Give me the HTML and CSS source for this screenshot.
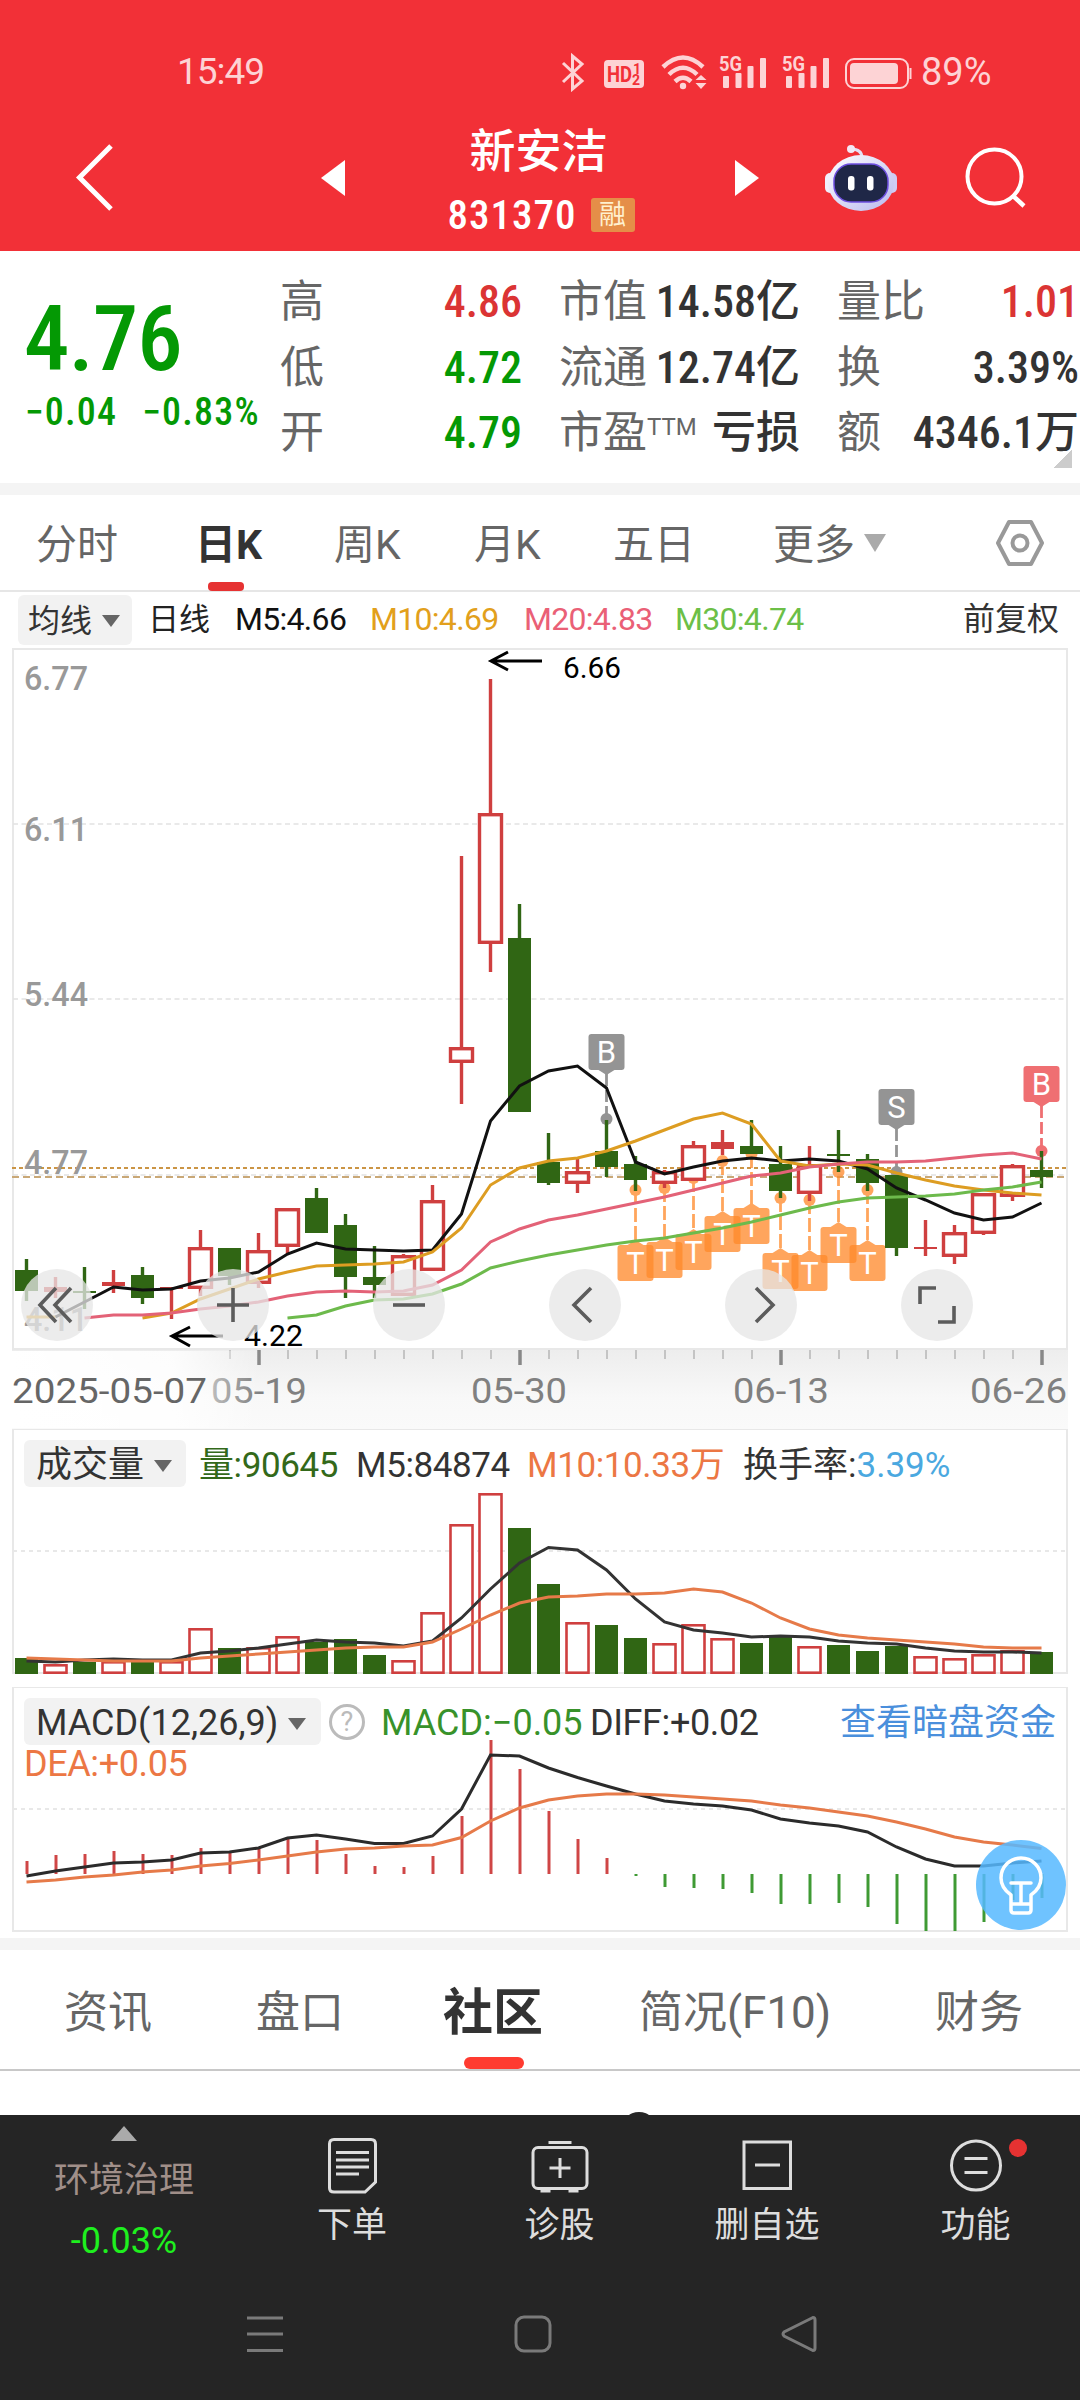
FILE: index.html
```html
<!DOCTYPE html>
<html lang="zh-CN">
<head>
    <meta charset="UTF-8">
    <title>新安洁 831370</title>
    <link rel="stylesheet" href="styles.css">
</head>
<body>
<div id="header">
    <div class="status">
        <span class="time">15:49</span>
        <svg class="status-icons" width="352" height="40" viewBox="560 50 352 40">
            <path d="M563 61 L582 79 L572.500 87 V54 L582 62 L563 80" fill="none" stroke="#fdd3d5" stroke-width="3"/>
            <rect x="604" y="58" width="40" height="28" rx="4" fill="#fdd3d5"/>
            <text x="607" y="80" font-size="22" font-weight="700" fill="#f23037" textLength="25" lengthAdjust="spacingAndGlyphs">HD</text>
            <text x="633" y="72" font-size="14" font-weight="700" fill="#f23037">1</text>
            <text x="632" y="83" font-size="14" font-weight="700" fill="#f23037">2</text>
            <g fill="none" stroke="#fdd3d5" stroke-width="4.500">
                <path d="M663 65 Q683 46 703 65"/>
                <path d="M669 72.500 Q683 59 697 72.500"/>
                <path d="M675 79.500 Q683 72 691 79.500"/>
            </g>
            <circle cx="683" cy="84" r="3.200" fill="#fdd3d5"/>
            <path d="M701 74 L706.500 79 H695.500z M701 88 L706.500 82 H695.500z" transform="translate(0 -1)" fill="#fdd3d5"/>
            <g id="sig" fill="#fdd3d5">
                <text x="719" y="69" font-size="20" font-weight="700" textLength="23" lengthAdjust="spacingAndGlyphs">5G</text>
                <rect x="723" y="74" width="6" height="12" rx="1"/>
                <rect x="735.500" y="71" width="6" height="15" rx="1"/>
                <rect x="747.500" y="64" width="6" height="22" rx="1"/>
                <rect x="760" y="56" width="6" height="30" rx="1"/>
            </g>
            <use href="#sig" x="63"/>
            <rect x="846" y="57" width="62" height="29" rx="8" fill="none" stroke="#fdd3d5" stroke-width="2"/>
            <rect x="850" y="61" width="48" height="21" rx="4" fill="#fdd3d5"/>
            <rect x="909.500" y="66" width="2" height="11" fill="#fdd3d5"/>
        </svg>
        <span>89%</span>
    </div>
    <div class="nav">
        <svg width="40" height="70" viewBox="75 142 40 70"><path d="M111 145 L79.500 176.500 L111 208" fill="none" stroke="#fff" stroke-width="5"/></svg>
        <svg width="26" height="38" viewBox="320 160 26 38"><path d="M321 179 L345 161 V197z" fill="#fff"/></svg>
        <div class="name">
            <h1>新安洁</h1>
            <p><span class="num">831370</span><i>融</i></p>
        </div>
        <svg width="26" height="38" viewBox="734 160 26 38"><path d="M759 179 L735 161 V197z" fill="#fff"/></svg>
        <svg width="74" height="70" viewBox="824 141 74 70">
            <defs>
                <linearGradient id="head" x1="0" y1="0" x2="1" y2="1">
                    <stop offset="0" stop-color="#fff"/>
                    <stop offset="1" stop-color="#b9b9ee"/>
                </linearGradient>
            </defs>
            <path d="M862 156 Q862 147 851 147" fill="none" stroke="#e4e0f6" stroke-width="3"/>
            <circle cx="851" cy="147" r="4" fill="#f3e9f6"/>
            <rect x="825" y="171" width="12" height="20" rx="5" fill="#f1effc"/>
            <rect x="885" y="171" width="12" height="20" rx="5" fill="#cfccf4"/>
            <ellipse cx="861" cy="181" rx="33" ry="28" fill="url(#head)"/>
            <rect x="834" y="162" width="54" height="38" rx="17" fill="#1f2747" stroke="#6e4fe0" stroke-width="1.500"/>
            <rect x="848" y="174" width="6.500" height="14.500" rx="3" fill="#fff"/>
            <rect x="867" y="174" width="6.500" height="14.500" rx="3" fill="#fff"/>
        </svg>
        <svg width="64" height="64" viewBox="964 147 64 64"><circle cx="994.500" cy="177.500" r="27" fill="none" stroke="#fff" stroke-width="4"/><path d="M1012 196 L1024 207" stroke="#fff" stroke-width="4.500"/></svg>
    </div>
</div>

<div id="quote">
    <div class="price">
        <b class="num green">4.76</b>
        <p class="num green"><span>−0.04</span><span>−0.83%</span></p>
    </div>
    <dl class="c1">
        <dt>高</dt><dd class="num red">4.86</dd>
        <dt>低</dt><dd class="num green">4.72</dd>
        <dt>开</dt><dd class="num green">4.79</dd>
    </dl>
    <dl class="c2">
        <dt>市值</dt><dd class="num">14.58亿</dd>
        <dt>流通</dt><dd class="num">12.74亿</dd>
        <dt>市盈<sup>TTM</sup></dt><dd class="num">亏损</dd>
    </dl>
    <dl class="c3">
        <dt>量比</dt><dd class="num red">1.01</dd>
        <dt>换</dt><dd class="num">3.39%</dd>
        <dt>额</dt><dd class="num">4346.1万</dd>
    </dl>
    <span class="corner"></span>
</div>

<div id="period">
    <span>分时</span>
    <span class="on">日K</span>
    <span>周K</span>
    <span>月K</span>
    <span>五日</span>
    <span>更多<em class="down"></em></span>
    <svg width="50" height="48" viewBox="0 0 50 48" fill="none" stroke="#999" stroke-width="4"><path d="M14 3 H36 L47 24 L36 45 H14 L3 24z" stroke-linejoin="round"/><circle cx="25" cy="24" r="7.500"/></svg>
</div>

<div id="ma">
    <span class="pick">均线<em class="down"></em></span>
    <span class="day">日线</span>
    <span class="num m5">M5:4.66</span>
    <span class="num m10">M10:4.69</span>
    <span class="num m20">M20:4.83</span>
    <span class="num m30">M30:4.74</span>
    <span class="fq">前复权</span>
</div>

<div id="kline">
    <svg id="k-svg" width="1080" height="781" viewBox="0 648 1080 781"></svg>
    <div class="tools">
        <span><svg viewBox="0 0 72 72"><path d="M35 19 L19 36 L35 53 M50 19 L34 36 L50 53"/></svg></span>
        <span><svg viewBox="0 0 72 72"><path d="M20 36 H52 M36 19 V53"/></svg></span>
        <span><svg viewBox="0 0 72 72"><path d="M20 36 H52"/></svg></span>
        <span><svg viewBox="0 0 72 72"><path d="M42 19 L25 36 L42 53"/></svg></span>
        <span><svg viewBox="0 0 72 72"><path d="M31 19 L48 36 L31 53"/></svg></span>
        <span><svg viewBox="0 0 72 72"><path d="M35 19 H19 V35 M37 53 H53 V37"/></svg></span>
    </div>
</div>

<div id="vol">
    <svg id="v-svg" width="1080" height="258" viewBox="0 1429 1080 258"></svg>
    <div class="legend">
        <span class="pick">成交量<em class="down"></em></span>
        <span class="num v1">量:90645</span>
        <span class="num v2">M5:84874</span>
        <span class="num v3">M10:10.33万</span>
        <span class="num v4">换手率:<i>3.39%</i></span>
    </div>
</div>

<div id="macd">
    <svg id="m-svg" width="1080" height="251" viewBox="0 1687 1080 251"></svg>
    <div class="legend">
        <span class="pick">MACD(12,26,9)<em class="down"></em></span>
        <span class="help">?</span>
        <span class="num d1">MACD:−0.05</span>
        <span class="num d2">DIFF:+0.02</span>
        <span class="link">查看暗盘资金</span>
        <span class="num d3">DEA:+0.05</span>
    </div>
    <span class="bulb"><svg width="90" height="90" viewBox="0 0 90 90" fill="none" stroke="#fff" stroke-width="3.500" stroke-linejoin="round" stroke-linecap="round"><path d="M35 62 V55 Q25 48 25 38 A20 20 0 0 1 65 38 Q65 48 55 55 V70 Q55 73 52 73 H38 Q35 73 35 70z M35 64 H55 M35 43 H55 M45 43 V64"/></svg></span>
</div>

<div id="tabs">
    <span>资讯</span>
    <span>盘口</span>
    <span class="on">社区</span>
    <span>简况(F10)</span>
    <span>财务</span>
</div>
<div id="feed"><i></i></div>

<div id="footer">
    <div class="bar">
        <div class="index">
            <em></em>
            <span>环境治理</span>
            <b>-0.03%</b>
        </div>
        <div class="item">
            <svg width="60" height="60" viewBox="322 2136 60 60"><path d="M334 2139.500 H371 Q375.500 2139.500 375.500 2144 V2182 L365 2192 H334 Q329.500 2192 329.500 2188 V2144 Q329.500 2139.500 334 2139.500z M336 2152.500 H369 M336 2160 H369 M336 2167 H369 M336 2174 H359"/></svg>
            <span>下单</span>
        </div>
        <div class="item">
            <svg width="60" height="60" viewBox="529.500 2136 60 60"><rect x="532.500" y="2147.500" width="54" height="41" rx="5"/><path d="M548 2142.500 H571 M559.500 2158 V2178 M549 2168 H570 M540 2191 H550 M568 2191 H578"/></svg>
            <span>诊股</span>
        </div>
        <div class="item">
            <svg width="60" height="60" viewBox="737 2136 60 60"><path d="M744 2142 H790.500 V2188.500 H744z M755 2165 H780"/></svg>
            <span>删自选</span>
        </div>
        <div class="item">
            <svg width="60" height="60" viewBox="945.500 2136 60 60"><circle cx="975.500" cy="2165.500" r="24.500"/><path d="M964 2158.500 H987 M964 2172.500 H987"/></svg>
            <span>功能</span>
            <i></i>
        </div>
    </div>
    <div class="sys">
        <svg width="38" height="38" viewBox="0 0 38 38"><path d="M1 3 H37 M1 19 H37 M1 35.500 H37"/></svg>
        <svg width="38" height="38" viewBox="0 0 38 38"><rect x="2" y="2" width="34" height="34" rx="8"/></svg>
        <svg width="38" height="38" viewBox="0 0 38 38"><path d="M33 2.500 L4 17 Q2 19 4 21 L33 35.500 Q35 35.500 35 33 V5 Q35 2.500 33 2.500z"/></svg>
    </div>
</div>

<script src="chart.js"></script>
</body>
</html>
```
FILE: styles.css
```css
* {
    box-sizing: border-box;
    margin: 0;
    padding: 0;
}

body {
    width: 1080px;
    height: 2400px;
    overflow: hidden;
    background: #fff;
    color: #333;
    font-family: Roboto, "Noto Sans CJK SC", sans-serif;
}

svg {
    display: block;
}

i, em {
    font-style: normal;
}

.num {
    font-stretch: 87%;
    font-weight: 500;
    white-space: nowrap;
}

.red {
    color: #db3434 !important;
}

.green {
    color: #049904 !important;
}

.down {
    display: inline-block;
    border: 9px solid transparent;
    border-top: 12px solid #666;
    border-bottom: 0;
}

/* header */
#header {
    height: 251px;
    background: #f23037;
    color: #fff;
}

.status {
    display: flex;
    align-items: center;
    height: 94px;
    padding: 50px 0 0 177px;
    font-size: 37px;
    line-height: 40px;
    letter-spacing: -1px;
    color: #fdd3d5;
}

.status .time {
    width: 383px;
}

.status-icons {
    margin-right: 9px;
    letter-spacing: 0;
}

.status-icons + span {
    font-size: 38px;
    letter-spacing: 0;
}

.nav {
    display: grid;
    grid-template-columns: 245px 80px 334px 90px 140px 64px;
    align-items: center;
    height: 157px;
    padding: 0 0 0 75px;
}

.nav > svg {
    margin-top: 10px;
}

.name {
    margin-left: 6px;
    width: 270px;
    text-align: center;
}

.name h1 {
    font-size: 46px;
    font-weight: 500;
    line-height: 56px;
    margin: 11px 0 0 -5px;
}

.name p {
    display: flex;
    justify-content: center;
    align-items: center;
    gap: 14px;
    height: 36px;
    margin-top: 18px;
    font-size: 41px;
}

.name .num {
    letter-spacing: 1px;
}

.name i {
    width: 44px;
    height: 34px;
    border-radius: 3px;
    background: #e58e48;
    color: #fff0cf;
    font-size: 27px;
    line-height: 35px;
}

/* quote */
#quote {
    position: relative;
    display: grid;
    grid-template-columns: 255px 242px 278px 279px;
    height: 244px;
    padding: 19px 0 0 25px;
    border-bottom: 12px solid #f4f4f4;
}

#quote dl {
    display: grid;
    grid-template-columns: 44px auto;
    grid-auto-rows: 65.5px;
    justify-content: space-between;
    font-size: 44px;
    line-height: 65px;
}

#quote dl.c2, #quote dl.c3 {
    margin-left: 37px;
}

#quote dt {
    color: #666;
    white-space: nowrap;
}

#quote dd {
    text-align: right;
}

#quote sup {
    display: inline-block;
    font-size: 24px;
    line-height: 22px;
    vertical-align: 13px;
}

.price b {
    display: block;
    font-size: 91px;
    font-weight: 500;
    line-height: 100px;
    letter-spacing: -1px;
    margin: 19px 0 0 -1px;
}

.price p {
    display: flex;
    gap: 25px;
    font-size: 38px;
    line-height: 44px;
    letter-spacing: 1.2px;
    margin-top: 1px;
}

.corner {
    position: absolute;
    right: 8px;
    top: 199px;
    width: 18px;
    height: 18px;
    background: linear-gradient(135deg, transparent 50%, #ccc 50%);
}

/* period tabs */
#period {
    display: grid;
    grid-template-columns: 159px 139px 140px 139px 160px 222px 60px;
    align-items: center;
    height: 97px;
    padding-left: 36px;
    border-bottom: 2px solid #e6e6e6;
    font-size: 41px;
    line-height: 89px;
    color: #666;
}

#period span {
    padding-top: 6px;
}

#period .on {
    position: relative;
    color: #333;
    font-weight: 700;
}

#period .on:after {
    content: "";
    position: absolute;
    left: 13px;
    bottom: -1px;
    width: 36px;
    height: 9px;
    border-radius: 4px;
    background: #e63232;
}

#period .down {
    border-width: 18px 11px 0;
    border-top-color: #aaa;
    margin-left: 9px;
    vertical-align: 7px;
}

/* ma row */
#ma {
    display: grid;
    grid-template-columns: 130px 87px 135px 154px 151px 288px auto;
    align-items: center;
    height: 56px;
    padding-left: 18px;
    padding-bottom: 1px;
    font-size: 32px;
    line-height: 53px;
}

#ma .num {
    font-weight: 400;
    font-stretch: normal;
    letter-spacing: -.7px;
}

.pick {
    background: #f2f2f2;
    border-radius: 6px;
    white-space: nowrap;
}

#ma .pick {
    width: 114px;
    height: 50px;
    padding-left: 10px;
    font-size: 32px;
}

.pick .down {
    margin-left: 10px;
    vertical-align: 5px;
}

.day {
    color: #222;
    font-size: 31px;
}

.m5 { color: #111; }
.m10 { color: #e2a01c; }
.m20 { color: #ea6076; }
.m30 { color: #6cbf47; }

/* charts */
#kline, #vol, #macd {
    position: relative;
}

.tools {
    position: absolute;
    left: 21px;
    top: 621px;
    display: flex;
    gap: 104px;
}

.tools span {
    width: 72px;
    height: 72px;
    border-radius: 50%;
    background: rgba(230, 230, 230, .76);
}

.tools path {
    fill: none;
    stroke: #5c5c5c;
    stroke-width: 3.6;
}

.legend {
    position: absolute;
    left: 24px;
    top: 11px;
    display: grid;
    grid-template-columns: 175px 157px 171px 216px auto;
    font-size: 35px;
    line-height: 51px;
}

.legend .num {
    font-weight: 400;
    font-stretch: normal;
    letter-spacing: -.4px;
}

.legend .v4 {
    letter-spacing: 0;
}

.legend .pick {
    width: 162px;
    height: 47px;
    padding-left: 12px;
    font-size: 36px;
}

.v1 { color: #33691a; }
.v3, .d3 { color: #ec7744; }
.v4 i { color: #4aa8e0; }

#macd .legend {
    grid-template-columns: 305px 52px 209px 250px auto;
    grid-auto-rows: 48px 36px;
}

#macd .num {
    font-size: 36px;
}

#macd .d1 {
    letter-spacing: 0;
}

#macd .pick {
    width: 297px;
}

.help {
    width: 36px;
    height: 36px;
    margin-top: 6px;
    border: 3px solid #bbb;
    border-radius: 50%;
    color: #bbb;
    font-size: 27px;
    line-height: 30px;
    text-align: center;
}

.d1 { color: #38922a; }

.link {
    color: #4a8fdc;
    font-size: 36px;
}

#macd .d3 {
    grid-column: 1;
    line-height: 36px;
}

.bulb {
    position: absolute;
    left: 976px;
    top: 153px;
    width: 90px;
    height: 90px;
    border-radius: 50%;
    background: rgba(86, 184, 255, .85);
}

/* section tabs */
#tabs {
    display: grid;
    grid-template-columns: 192px 187px 196px 296px auto;
    align-items: center;
    height: 133px;
    padding-left: 64px;
    border-top: 12px solid #f4f4f4;
    border-bottom: 2px solid #c8c8c8;
    font-size: 44px;
    line-height: 112px;
    color: #666;
}

#tabs span {
    padding-top: 7px;
}

#tabs .on {
    position: relative;
    font-size: 50px;
    font-weight: 700;
    color: #333;
}

#tabs .on:after {
    content: "";
    position: absolute;
    left: 21px;
    bottom: 0;
    width: 60px;
    height: 12px;
    border-radius: 6px;
    background: #ff3b30;
}

#feed {
    height: 44px;
    overflow: hidden;
}

#feed i {
    display: block;
    width: 36px;
    height: 36px;
    margin: 41px 0 0 621px;
    border-radius: 50%;
    background: #252525;
}

/* footer */
#footer {
    height: 285px;
    background: #252525;
}

.bar {
    display: grid;
    grid-template-columns: 248px 208px 207px 208px 209px;
    height: 180px;
    color: #ddd;
    font-size: 35px;
    text-align: center;
}

.index {
    padding-top: 11px;
}

.index em {
    display: block;
    width: 26px;
    margin: 0 auto;
    border: 13px solid transparent;
    border-top: 0;
    border-bottom: 15px solid #aaa;
}

.index span {
    display: block;
    line-height: 52px;
    margin-top: 14px;
    color: #a08f89;
}

.index b {
    display: block;
    margin-top: 14px;
    font-size: 36px;
    font-weight: 400;
    line-height: 40px;
    color: #1ef01e;
}

.item {
    position: relative;
    padding-top: 21px;
}

.item svg {
    margin: 0 auto;
    fill: none;
    stroke: #ddd;
    stroke-width: 3;
}

.item span {
    display: block;
    line-height: 50px;
    margin-top: 5px;
}

.item i {
    position: absolute;
    left: 138px;
    top: 24px;
    width: 18px;
    height: 18px;
    border-radius: 50%;
    background: #e63232;
}

.sys {
    display: grid;
    grid-template-columns: 268px 266px 60px;
    padding: 20px 0 0 246px;
}

.sys svg {
    fill: none;
    stroke: #7a7a7a;
    stroke-width: 3;
}
```
FILE: chart.js
```js
var STEP = 29;
var X0 = 26.5;
var RED = '#cf3f3f';
var GREEN = '#306614';

// [up, body top, body bottom, high, low]
var candles = [
    [0, 1270, 1291, 1259, 1301], [1, 1287, 1292, 1277, 1298], [0, 1291, 1293, 1267, 1309],
    [1, 1282, 1286, 1270, 1293], [0, 1275, 1298, 1267, 1304], [1, 1287, 1289, 1287, 1319],
    [1, 1247, 1289, 1230, 1296], [0, 1248, 1276, 1248, 1285], [1, 1250, 1284, 1233, 1288],
    [1, 1208, 1247, 1208, 1254], [0, 1198, 1233, 1188, 1233], [0, 1225, 1277, 1214, 1298],
    [0, 1277, 1285, 1246, 1298], [1, 1255, 1296, 1254, 1296], [1, 1200, 1271, 1185, 1271],
    [1, 1047, 1063, 856, 1104], [1, 813, 944, 679, 972], [0, 938, 1112, 904, 1112],
    [0, 1162, 1183, 1133, 1185], [1, 1171, 1184, 1157, 1193], [0, 1151, 1167, 1120, 1177],
    [0, 1164, 1180, 1156, 1191], [1, 1171, 1184, 1170, 1188], [1, 1145, 1181, 1141, 1181],
    [1, 1142, 1149, 1130, 1155], [0, 1146, 1154, 1120, 1154], [0, 1164, 1191, 1146, 1198],
    [1, 1164, 1194, 1146, 1201], [0, 1154, 1156, 1130, 1172], [0, 1159, 1183, 1154, 1191],
    [0, 1175, 1248, 1175, 1256], [1, 1247, 1249, 1220, 1256], [1, 1232, 1257, 1225, 1264],
    [1, 1193, 1234, 1193, 1235], [1, 1165, 1197, 1164, 1201], [0, 1170, 1177, 1151, 1188]
];
var ma5 = [1317, 1302, 1287, 1290, 1289, 1281, 1278, 1272, 1254, 1243, 1249, 1250, 1251, 1250, 1214, 1121, 1086, 1071, 1066, 1088, 1162, 1174, 1167, 1161, 1158, 1161, 1159, 1161, 1169, 1188, 1200, 1213, 1220, 1217, 1203];
var ma10 = [1318, 1313, 1299, 1289, 1279, 1272, 1266, 1265, 1264, 1262, 1252, 1228, 1185, 1168, 1161, 1158, 1151, 1141, 1130, 1119, 1113, 1124, 1161, 1166, 1164, 1165, 1173, 1180, 1186, 1190, 1193, 1195];
var ma20 = [1318, 1315, 1315, 1313, 1309, 1306, 1302, 1296, 1292, 1291, 1292, 1291, 1285, 1270, 1242, 1229, 1220, 1215, 1209, 1203, 1197, 1190, 1183, 1176, 1173, 1167, 1164, 1162, 1162, 1161, 1158, 1155, 1153, 1159];
var ma30 = [1318, 1315, 1306, 1300, 1299, 1294, 1284, 1268, 1261, 1255, 1250, 1245, 1241, 1238, 1233, 1228, 1222, 1215, 1208, 1202, 1198, 1197, 1196, 1194, 1190, 1187, 1182];

var vols = [1658, 1664, 1662, 1661, 1662, 1661, 1628, 1648, 1647, 1636, 1642, 1639, 1655, 1660, 1612, 1524, 1493, 1528, 1584, 1622, 1625, 1638, 1643, 1624, 1638, 1643, 1637, 1646, 1645, 1651, 1646, 1656, 1658, 1654, 1650, 1652];
var vma5 = [1661, 1662, 1660, 1659, 1660, 1660, 1653, 1651, 1648, 1644, 1640, 1642, 1643, 1646, 1641, 1618, 1589, 1563, 1547.5, 1550, 1570, 1599, 1622, 1630, 1633, 1637, 1636, 1637, 1641, 1643, 1644, 1648, 1651, 1652, 1652, 1653];
var vma10 = [1658, 1659, 1660, 1661, 1661, 1661, 1658, 1656, 1654, 1652, 1650, 1648, 1647, 1647, 1642, 1629, 1615, 1603, 1597, 1596, 1594, 1594, 1593, 1589, 1592, 1603, 1618, 1629, 1635, 1638, 1640, 1642, 1644, 1647, 1648, 1648];

var bars = [1861, 1855, 1854, 1851, 1854, 1855, 1848, 1852, 1848, 1838, 1840, 1854, 1866, 1867, 1856, 1816, 1740, 1769, 1811, 1839, 1858, 1876, 1887, 1888, 1889, 1893, 1904, 1904, 1903, 1907, 1924, 1931, 1931, 1922, 1900, 1898];
var diff = [1876, 1871, 1867, 1863, 1862, 1860, 1853, 1852, 1848, 1838, 1835, 1839, 1843.5, 1843.5, 1836, 1809, 1755, 1756, 1768, 1777.5, 1786, 1794, 1801, 1804, 1806, 1810, 1819, 1823, 1826, 1832, 1847, 1859, 1866, 1866, 1863, 1861];
var dea = [1882, 1880, 1877, 1875, 1872, 1870, 1866, 1863.5, 1860, 1856, 1852, 1849, 1848, 1846, 1845, 1837.5, 1821, 1808, 1800, 1796, 1794, 1794, 1795, 1797, 1799, 1801, 1805, 1808, 1812, 1816, 1822, 1829, 1837, 1842, 1845, 1848.5];

// [index, letter, box top, dot y, colour]
var marks = [
    [20, 'B', 1034, 1119, '#949494'], [30, 'S', 1089, 1172, '#949494'], [35, 'B', 1066, 1151, '#ef6f72'],
    [21, 'T', 1245, 1190], [22, 'T', 1242, 1188], [23, 'T', 1234, 1178],
    [24, 'T', 1216, 1161], [25, 'T', 1208, 1154], [26, 'T', 1253, 1198],
    [27, 'T', 1255, 1200], [28, 'T', 1227, 1172], [29, 'T', 1245, 1190]
];

function px(i) {
    return X0 + i * STEP;
}

function rect(x, y, w, h, attr) {
    return '<rect x="' + x + '" y="' + y + '" width="' + w + '" height="' + h + '" ' + attr + '/>';
}

function line(x1, y1, x2, y2, color, w, dash) {
    return '<path d="M' + x1 + ' ' + y1 + 'L' + x2 + ' ' + y2 + '" stroke="' + color + '" stroke-width="' + w + '"' + (dash ? ' stroke-dasharray="' + dash + '"' : '') + '/>';
}

function curve(list, from, color) {
    var p = [];
    for (var i = 0; i < list.length; i++) {
        p.push(px(i + from) + ',' + list[i]);
    }
    return '<polyline points="' + p.join(' ') + '" fill="none" stroke="' + color + '" stroke-width="3"/>';
}

function text(x, y, s, w, size, color, weight) {
    return '<text x="' + x + '" y="' + y + '" font-size="' + size + '" font-weight="' + weight + '" fill="' + color + '" textLength="' + w + '" lengthAdjust="spacingAndGlyphs">' + s + '</text>';
}

function frame(top, bottom) {
    return rect(13, top, 1054, bottom - top, 'fill="none" stroke="#e8e8e8" stroke-width="2"');
}

function box(i, top, bottom, up, w) {
    if (up && bottom - top > 7) {
        return rect(px(i) - 11, top + w / 2, 22, bottom - top - w, 'fill="#fff" stroke="' + RED + '" stroke-width="' + w + '"');
    }
    return rect(px(i) - 11.5, top, 23, bottom - top, 'fill="' + (up ? RED : GREEN) + '"');
}

function mark(m) {
    var x = px(m[0]), y = m[2], c = m[4] || '#ff8a2b', o = m[4] ? 1 : 0.76, s;
    if (m[1] == 'T') {
        s = line(x, m[3], x, y - 4, c, 2.8, '14 4') +
            '<path fill="' + c + '" d="M' + (x - 8) + ' ' + y + 'L' + x + ' ' + (y - 5) + 'L' + (x + 8) + ' ' + y + 'z"/>';
    } else {
        s = line(x, y + 40, x, m[3], c, 2.8, '12 4') +
            '<path fill="' + c + '" d="M' + (x - 8) + ' ' + (y + 36) + 'L' + x + ' ' + (y + 41) + 'L' + (x + 8) + ' ' + (y + 36) + 'z"/>';
    }
    s += '<circle cx="' + x + '" cy="' + m[3] + '" r="6" fill="' + c + '"/>';
    s += rect(x - 18, y, 36, 36, 'rx="3" fill="' + c + '"');
    s += '<text x="' + x + '" y="' + (y + (m[1] == 'T' ? 29 : 29)) + '" font-size="31" text-anchor="middle" fill="#fff">' + m[1] + '</text>';
    return '<g opacity="' + o + '">' + s + '</g>';
}

function drawK() {
    var s = '<defs>' +
        '<linearGradient id="g1" x1="0" y1="0" x2="0" y2="1"><stop offset="0" stop-color="#ededed"/><stop offset="0.6" stop-color="#f8f8f8"/><stop offset="1" stop-color="#fafafa"/></linearGradient>' +
        '<linearGradient id="g2"><stop offset="0" stop-color="#fff"/><stop offset="0.65" stop-color="#fff" stop-opacity="0.85"/><stop offset="1" stop-color="#fff" stop-opacity="0"/></linearGradient></defs>';
    s += rect(12, 1350, 1056, 79, 'fill="url(#g1)"');
    s += frame(649, 1349);
    [824, 999, 1175].forEach(function (y) {
        s += line(13, y, 1066, y, '#e2e2e2', 1.4, '5 3.5');
    });
    s += line(12, 1168, 1066, 1168, '#cb9545', 2, '4 3');
    s += line(12, 1177, 1066, 1177, '#c9a877', 2, '7 4');

    for (var t = 7; t < 36; t++) {
        if ((t - 8) % 9 == 0) {
            s += line(px(t) + 0.5, 1350, px(t) + 0.5, 1365, '#888', 3.5);
        } else {
            s += line(px(t) + 0.5, 1350, px(t) + 0.5, 1359, '#c4c4c4', 2);
        }
    }
    s += text(211, 1403, '05-19', 96, 35, '#808080', 400);
    s += rect(12, 1351, 248, 77, 'fill="url(#g2)"');
    s += text(12, 1403, '2025-05-07', 195, 35, '#666', 400);
    s += text(471, 1403, '05-30', 96, 35, '#808080', 400);
    s += text(733, 1403, '06-13', 96, 35, '#808080', 400);
    s += text(970, 1403, '06-26', 97, 35, '#808080', 400);

    s += text(24, 690, '6.77', 64, 34, '#999', 500);
    s += text(24, 841, '6.11', 64, 34, '#999', 500);
    s += text(24, 1006, '5.44', 64, 34, '#999', 500);
    s += text(24, 1174, '4.77', 64, 34, '#999', 500);
    s += text(24, 1331, '4.11', 64, 34, '#999', 500);

    for (var k = 0; k < marks.length; k++) {
        s += mark(marks[k]);
    }
    for (var i = 0; i < candles.length; i++) {
        var c = candles[i];
        s += line(px(i), c[3], px(i), c[4], c[0] ? RED : GREEN, 3.4);
        s += box(i, c[1], c[2], c[0], 3.4);
    }
    s += '<path d="M26.5 1317H55.500" stroke="#e0a224" stroke-width="3"/>';
    s += curve(ma5, 1, '#111') + curve(ma10, 4, '#dd9d22') + curve(ma20, 2, '#e36277') + curve(ma30, 9, '#6dba4c');

    s += '<path d="M542 661H491M508 652L491 661L508 670M223 1336H172M190 1327L172 1336L190 1346" fill="none" stroke="#000" stroke-width="3"/>';
    s += text(563, 678, '6.66', 58, 29, '#000', 400);
    s += text(244, 1346, '4.22', 59, 29, '#000', 400);
    document.getElementById('k-svg').innerHTML = s;
}

function drawVol() {
    var s = frame(1429, 1673) + line(13, 1551, 1066, 1551, '#e8e8e8', 2, '4 4');
    for (var i = 0; i < vols.length; i++) {
        s += box(i, vols[i], 1674, candles[i][0], 2.6);
    }
    s += curve(vma5, 0, '#333') + curve(vma10, 0, '#e67a49');
    document.getElementById('v-svg').innerHTML = s;
}

function drawMacd() {
    var s = frame(1687, 1931) + line(13, 1809, 1066, 1809, '#e8e8e8', 2, '4 4');
    for (var i = 0; i < bars.length; i++) {
        s += line(px(i) + 0.5, 1874, px(i) + 0.5, bars[i], bars[i] < 1874 ? '#cf4646' : '#3f9a34', 3);
    }
    s += curve(diff, 0, '#2b2b2b') + curve(dea, 0, '#e67a49');
    document.getElementById('m-svg').innerHTML = s;
}

drawK();
drawVol();
drawMacd();
```
